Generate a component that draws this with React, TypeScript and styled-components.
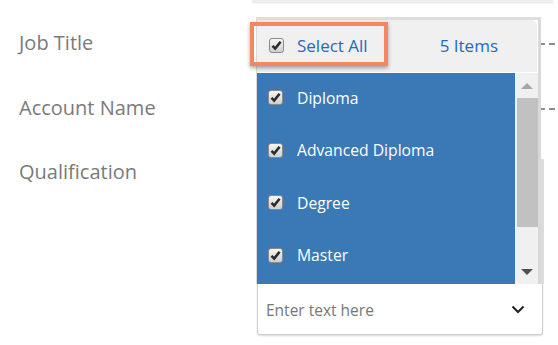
import { createGlobalStyle, styled } from "styled-components";

const GlobalStyle = createGlobalStyle`
  html, body {
    margin: 0;
    padding: 0;
    background: #ffffff;
  }
  body {
    font-family: "Segoe UI", "Open Sans", "Noto Sans", sans-serif;
  }
`;

const Page = styled.div`
  position: relative;
  width: 558px;
  height: 345px;
  overflow: hidden;
  background: #fff;
`;

const TopEdge = styled.div`
  margin-left: 252px;
  width: 301px;
  height: 2px;
  background: #efefef;
  box-shadow: 0 1px 2px rgba(0, 0, 0, 0.12);
`;

const Form = styled.div`
  display: grid;
  grid-template-columns: 238px 1fr;
  padding-left: 19px;
  margin-top: 16px;
`;

const Label = styled.div<{ $h: number }>`
  height: ${(p) => p.$h}px;
  font-size: 20px;
  color: #7a7a7a;
  line-height: 20px;
  padding-top: 15px;
  box-sizing: border-box;
`;

const Field = styled.div<{ $h: number }>`
  height: ${(p) => p.$h}px;
  display: flex;
  align-items: flex-start;
  padding-top: 25px;
  box-sizing: border-box;
`;

const DashLine = styled.div`
  width: 100%;
  border-bottom: 2px dashed #8c8c8c;
  margin-right: 3px;
`;

const QualField = styled.div`
  height: 176px;
  margin-top: 12px;
  display: flex;
  flex-direction: column;
  justify-content: flex-end;
`;

const QualBody = styled.div`
  flex: 1;
  width: 287px;
  box-sizing: border-box;
  border-right: 3px solid #dcdcdc;
`;

const Combo = styled.div`
  width: 286px;
  height: 51px;
  box-sizing: border-box;
  border: 1px solid #cfcfcf;
  border-top: none;
  border-radius: 0 0 3px 3px;
  display: flex;
  align-items: center;
  justify-content: space-between;
  padding: 0 17px 0 8px;
  box-shadow: 0 1px 2px rgba(0, 0, 0, 0.15);
`;

const Placeholder = styled.span`
  font-size: 15.5px;
  color: #777;
  padding-top: 2px;
`;

const Popup = styled.div`
  position: absolute;
  left: 256px;
  top: 17px;
  width: 285px;
  height: 267px;
  box-sizing: border-box;
  border: 1px solid #d9d9d9;
  border-right: 3px solid #d9d9d9;
  border-top: 3px solid #dedede;
  border-bottom: none;
  background: #fff;
  display: flex;
  flex-direction: column;
`;

const Header = styled.div`
  height: 52px;
  margin-right: 1px;
  background: #f1f0f1;
  border-top-right-radius: 6px;
  display: flex;
  align-items: center;
  padding: 0 0 2px 12px;
  box-sizing: border-box;
  margin-bottom: 1px;
`;

const SelectAll = styled.span`
  margin-left: 13px;
  font-size: 17px;
  color: #1e6ac0;
`;

const Count = styled.span`
  margin-left: 72px;
  font-size: 17px;
  color: #1e6ac0;
`;

const ListWrap = styled.div`
  flex: 1;
  display: flex;
`;

const List = styled.div`
  flex: 1;
  background: #3b79b6;
  display: flex;
  flex-direction: column;
`;

const Item = styled.div`
  height: 52.5px;
  box-sizing: border-box;
  display: flex;
  align-items: center;
  padding: 0 0 3px 11px;
`;

const ItemText = styled.span`
  margin-left: 14px;
  font-size: 15.7px;
  color: #ffffff;
`;

const Scroll = styled.div`
  width: 23px;
  background: #f0f0f0;
  display: flex;
  flex-direction: column;
  align-items: stretch;
`;

const Arrow = styled.div<{ $dir: "up" | "down" }>`
  height: 25px;
  display: flex;
  align-items: center;
  justify-content: center;
  &::after {
    content: "";
    border-left: 6px solid transparent;
    border-right: 6px solid transparent;
    ${(p) =>
      p.$dir === "up"
        ? "border-bottom: 6px solid #a6a6a6;"
        : "border-top: 6px solid #505050;"}
  }
`;

const Thumb = styled.div`
  height: 129px;
  margin: 0 0 0 2px;
  background: #c1c1c1;
`;

const Spacer = styled.div`
  flex: 1;
`;

const Highlight = styled.div`
  position: absolute;
  left: 250px;
  top: 22px;
  width: 138px;
  height: 44px;
  box-sizing: border-box;
  border: 4px solid #f4875f;
  box-shadow: 0 2px 4px rgba(0, 0, 0, 0.35);
`;

const Box = styled.span`
  width: 15px;
  height: 15px;
  box-sizing: border-box;
  border: 1px solid #8a8a8a;
  border-radius: 3px;
  background: linear-gradient(#f6f6f6, #cfcfcf);
  display: inline-flex;
  align-items: center;
  justify-content: center;
  flex-shrink: 0;
`;

const Check = () => (
  <Box>
    <svg width="11" height="11" viewBox="0 0 11 11">
      <path d="M1.5 5.8 L4.2 8.6 L9.6 1.8" fill="none" stroke="#2b2b2b" strokeWidth="2.6" />
    </svg>
  </Box>
);

const items = ["Diploma", "Advanced Diploma", "Degree", "Master"];

export default function App() {
  return (
    <Page>
      <GlobalStyle />
      <TopEdge />
      <Form>
        <Label $h={65}>Job Title</Label>
        <Field $h={65}>
          <DashLine />
        </Field>
        <Label $h={64}>Account Name</Label>
        <Field $h={64}>
          <DashLine />
        </Field>
        <Label $h={60}>Qualification</Label>
        <QualField>
          <QualBody />
          <Combo>
            <Placeholder>Enter text here</Placeholder>
            <svg width="14" height="9" viewBox="0 0 14 9">
              <path d="M1.5 1.5 L7 7 L12.5 1.5" fill="none" stroke="#222" strokeWidth="2" />
            </svg>
          </Combo>
        </QualField>
      </Form>

      <Popup>
        <Header>
          <Check />
          <SelectAll>Select All</SelectAll>
          <Count>5 Items</Count>
        </Header>
        <ListWrap>
          <List>
            {items.map((it) => (
              <Item key={it}>
                <Check />
                <ItemText>{it}</ItemText>
              </Item>
            ))}
          </List>
          <Scroll>
            <Arrow $dir="up" />
            <Thumb />
            <Spacer />
            <Arrow $dir="down" />
          </Scroll>
        </ListWrap>
      </Popup>
      <Highlight />
    </Page>
  );
}
